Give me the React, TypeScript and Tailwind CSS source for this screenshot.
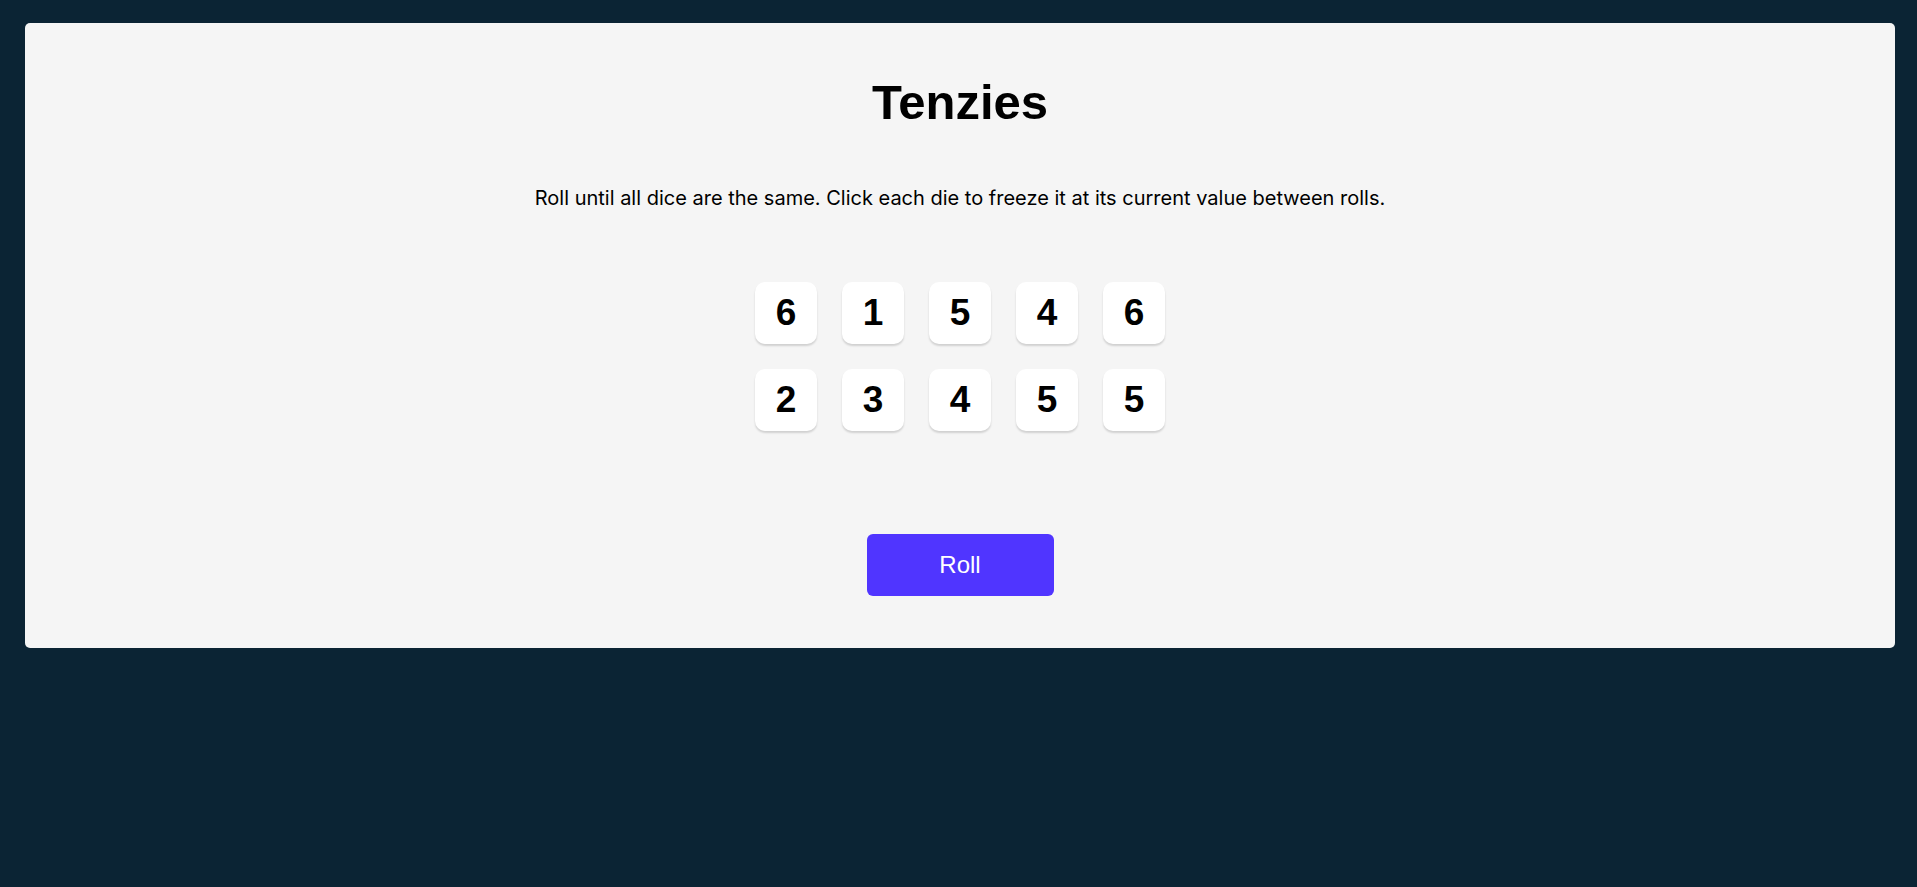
const dice = [6, 1, 5, 4, 6, 2, 3, 4, 5, 5];

function Die({ value }: { value: number }) {
  return (
    <button className="flex h-[62px] w-[62px] items-center justify-center rounded-[10px] bg-white font-['Liberation_Sans',Arial,sans-serif] text-[37px] font-bold text-black shadow-[0_2px_2px_rgba(0,0,0,0.15)]">
      {value}
    </button>
  );
}

export default function App() {
  return (
    <div className="min-h-[887px] bg-[#0b2434] pt-[23px] pl-[25px] pr-[22px]">
      <main className="flex h-[625px] flex-col items-center rounded-[5px] bg-[#f5f5f5] pt-[55px]">
        <h1 className="font-['Liberation_Sans',Arial,sans-serif] text-[49px] leading-[48px] font-bold text-black">
          Tenzies
        </h1>
        <p className="mt-[60px] font-['Inter',sans-serif] text-[20px] leading-[24px] text-black">
          Roll until all dice are the same. Click each die to freeze it at its current value between rolls.
        </p>
        <div className="mt-[72px] grid grid-cols-5 gap-[25px]">
          {dice.map((d, i) => (
            <Die key={i} value={d} />
          ))}
        </div>
        <button className="mt-[103px] h-[62px] w-[187px] rounded-[6px] bg-[#5035ff] font-['Liberation_Sans',Arial,sans-serif] text-[24px] text-white">
          Roll
        </button>
      </main>
    </div>
  );
}
